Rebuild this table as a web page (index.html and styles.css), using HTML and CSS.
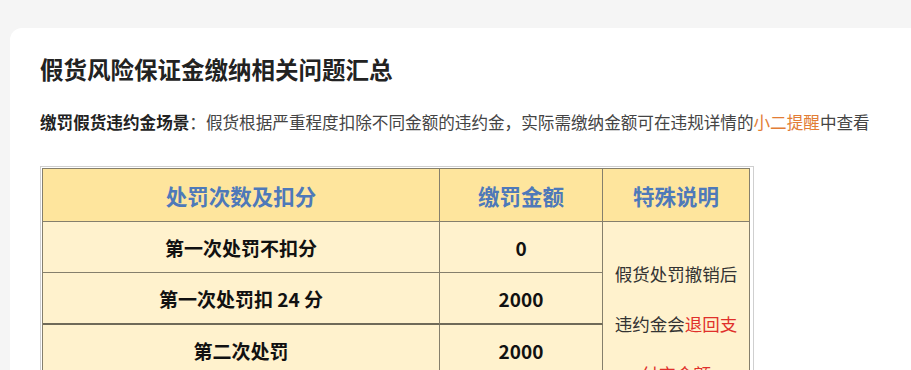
FILE: index.html
```html
<!DOCTYPE html>
<html lang="zh-CN">
<head>
<meta charset="utf-8">
<title>假货风险保证金缴纳相关问题汇总</title>
<link rel="stylesheet" href="styles.css">
</head>
<body>
<div class="page">
  <div class="card">
    <h1 class="title">假货风险保证金缴纳相关问题汇总</h1>
    <p class="desc"><b>缴罚假货违约金场景</b>：假货根据严重程度扣除不同金额的违约金，实际需缴纳金额可在违规详情的<span class="hl">小二提醒</span>中查看</p>
    <div class="frame">
      <table class="grid">
        <colgroup>
          <col class="c1"><col class="c2"><col class="c3">
        </colgroup>
        <tr class="head">
          <th>处罚次数及扣分</th>
          <th>缴罚金额</th>
          <th>特殊说明</th>
        </tr>
        <tr class="r1">
          <td>第一次处罚不扣分</td>
          <td>0</td>
          <td class="note" rowspan="4">
            <div>假货处罚撤销后</div>
            <div>违约金会<span class="red">退回支</span></div>
            <div><span class="red">付宝金额</span></div>
          </td>
        </tr>
        <tr class="r2">
          <td>第一次处罚扣 24 分</td>
          <td>2000</td>
        </tr>
        <tr class="r3">
          <td>第二次处罚</td>
          <td>2000</td>
        </tr>
        <tr class="r4">
          <td></td>
          <td></td>
        </tr>
      </table>
    </div>
  </div>
</div>
</body>
</html>
```

FILE: styles.css
```css
html, body {
  margin: 0;
  padding: 0;
  background: #f5f5f5;
  overflow: hidden;
}
body {
  font-family: "Noto Sans CJK SC", "Noto Sans", sans-serif;
  color: #333;
}
.page {
  padding: 28px 0 0 10px;
}
.card {
  background: #fff;
  border-radius: 12px 0 0 0;
  padding: 25px 30px 40px 30px;
  min-height: 400px;
}
.title {
  margin: 0;
  font-size: 23.5px;
  line-height: 32px;
  font-weight: 700;
  color: #222;
}
.desc {
  margin: 25px 0 0 0;
  font-size: 16.6px;
  line-height: 24px;
  color: #444;
  white-space: nowrap;
}
.desc b {
  color: #222;
  font-weight: 700;
}
.hl {
  color: #e27d36;
}
.frame {
  margin-top: 32px;
  width: 710px;
  border: 1px solid #cfcfcf;
  padding: 1px;
}
.grid {
  width: 708px;
  table-layout: fixed;
  border-collapse: separate;
  border-spacing: 0;
  border-top: 1px solid #857f6c;
  border-left: 1px solid #857f6c;
  background: #fff2cd;
}
.c1 { width: 397px; }
.c2 { width: 163px; }
.c3 { width: 147px; }
.grid th,
.grid td {
  padding: 0;
  text-align: center;
  vertical-align: middle;
  border-right: 1px solid #857f6c;
  border-bottom: 1px solid #857f6c;
}
.grid th {
  background: #fee59d;
  color: #4e79b9;
  font-size: 21.5px;
  font-weight: 700;
}
.grid td {
  color: #111;
  font-size: 19px;
  font-weight: 700;
}
.head { height: 53px; }
.r1 { height: 51px; }
.r2 { height: 52px; }
.r2 td:not(.note) { border-bottom: 2px solid #6f6a58; }
.r3 { height: 51px; }
.r4 { height: 51px; }
.grid td.note {
  font-size: 17.5px;
  font-weight: 400;
  color: #333;
  line-height: 50px;
}
.red {
  color: #e0302b;
}
```
